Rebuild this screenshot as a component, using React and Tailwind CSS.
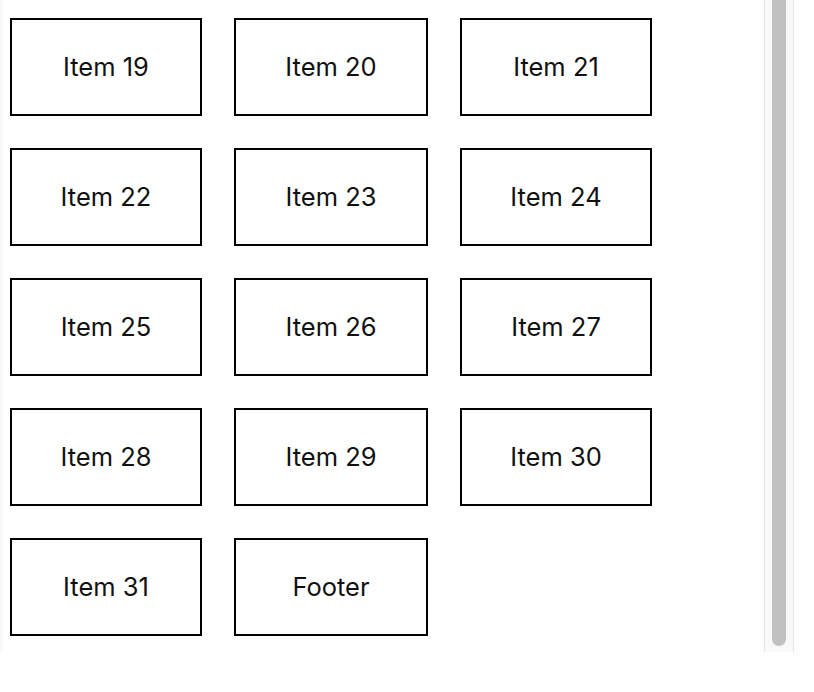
import React from "react";

const items = [
  "Item 19", "Item 20", "Item 21",
  "Item 22", "Item 23", "Item 24",
  "Item 25", "Item 26", "Item 27",
  "Item 28", "Item 29", "Item 30",
  "Item 31", "Footer",
];

const Box = ({ label }) => (
  <div className="flex h-[98px] items-center justify-center border-2 border-black pt-px text-[25.5px] text-[#111]">
    {label}
  </div>
);

const App = () => {
  return (
    <div
      className="h-[692px] w-[814px] overflow-hidden bg-white"
      style={{ fontFamily: "Inter, 'Noto Sans', sans-serif" }}
    >
      <div className="flex h-[652px] w-[794px]">
        <div className="w-[3px] bg-[#f8f8f8]" />
        <div className="flex-1 pl-[7px] pt-[18px]">
          <div className="grid grid-cols-[192px_194px_192px] gap-8">
            {items.map((it) => (
              <Box key={it} label={it} />
            ))}
          </div>
        </div>
        <div className="flex w-[30px] justify-center border-x border-[#e6e6e6] bg-[#f9f9f9]">
          <div className="h-[646px] w-[14px] rounded-b-[7px] bg-[#c1c1c1]" />
        </div>
      </div>
    </div>
  );
};

export default App;
